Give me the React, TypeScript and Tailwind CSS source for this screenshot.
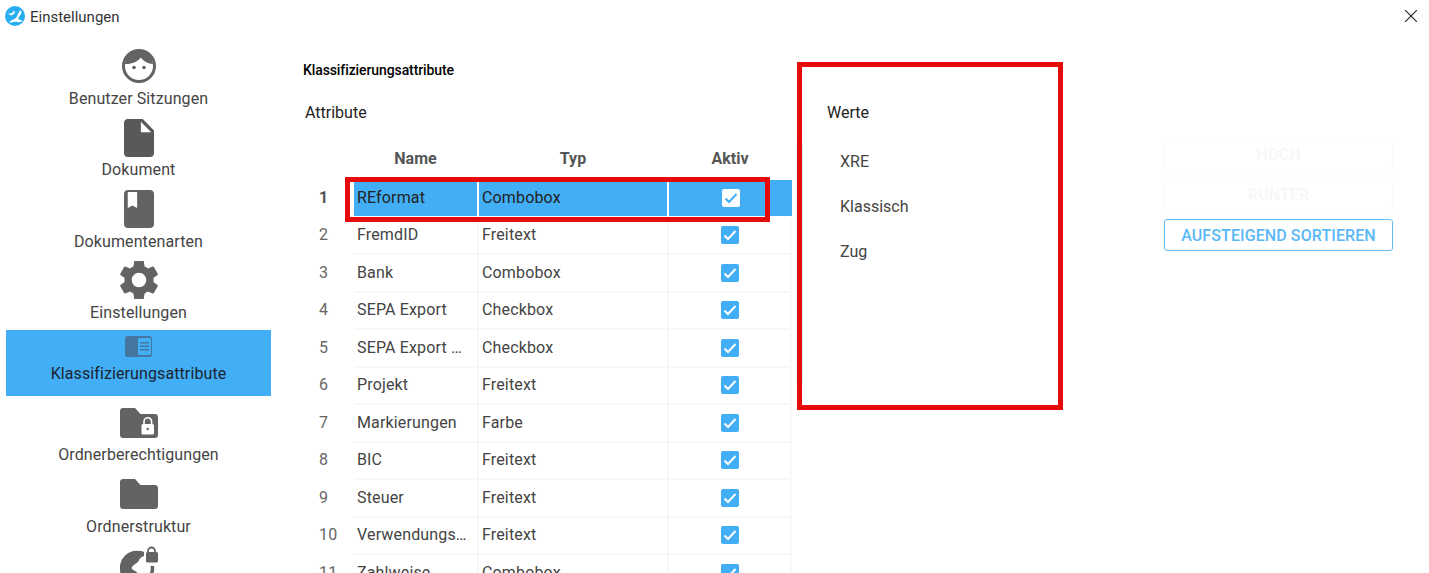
import React from "react";

const DARK = "#636363";

function FaceIcon() {
  return (
    <svg width="34" height="34" viewBox="0 0 34 34">
      <circle cx="17" cy="17" r="15.5" fill="#fff" stroke={DARK} strokeWidth="3" />
      <path d="M3 15C4 6 10 1.5 17 1.5S30 6 31 15C26 15 21 12 19 8.5C16 12.5 9 15.5 3 15Z" fill={DARK} />
      <circle cx="12" cy="18.5" r="1.8" fill={DARK} />
      <circle cx="22" cy="18.5" r="1.8" fill={DARK} />
    </svg>
  );
}

function DocIcon() {
  return (
    <svg width="30" height="38" viewBox="4 2 16 20" preserveAspectRatio="none">
      <path fill="#58595b" d="M6 2c-1.1 0-1.99.9-1.99 2L4 20c0 1.1.89 2 1.99 2H18c1.1 0 2-.9 2-2V8l-6-6H6zm7 7V3.5L18.5 9H13z" />
    </svg>
  );
}

function BookIcon() {
  return (
    <svg width="30" height="38" viewBox="4 2 16 20" preserveAspectRatio="none">
      <path fill={DARK} d="M18 2H6c-1.1 0-2 .9-2 2v16c0 1.1.9 2 2 2h12c1.1 0 2-.9 2-2V4c0-1.1-.9-2-2-2zM6 3h5v8.5l-2.5-1.3L6 11.500V3z" fillRule="evenodd" />
    </svg>
  );
}

function GearIcon() {
  return (
    <svg width="38" height="38" viewBox="2.600 2.600 18.800 18.800">
      <path fill={DARK} d="M19.140 12.940c.04-.3.06-.61.06-.94 0-.32-.02-.64-.07-.94l2.030-1.580c.18-.14.23-.41.12-.61l-1.920-3.320c-.12-.22-.37-.29-.59-.22l-2.390.96c-.5-.38-1.030-.7-1.620-.94l-.36-2.540c-.04-.24-.24-.41-.48-.41h-3.840c-.24 0-.43.17-.47.41l-.36 2.540c-.59.24-1.130.57-1.620.94l-2.390-.96c-.22-.08-.47 0-.59.22L2.740 8.870c-.12.21-.08.47.12.61l2.030 1.580c-.05.3-.09.63-.09.94s.02.64.07.94l-2.030 1.580c-.18.14-.23.41-.12.61l1.920 3.320c.12.22.37.29.59.22l2.390-.96c.5.38 1.030.7 1.620.94l.36 2.540c.05.24.24.41.48.41h3.840c.24 0 .44-.17.47-.41l.36-2.540c.59-.24 1.130-.56 1.620-.94l2.390.96c.22.08.47 0 .59-.22l1.920-3.320c.12-.22.07-.47-.12-.61l-2.010-1.580zM12 15.600c-1.980 0-3.600-1.620-3.600-3.600s1.620-3.600 3.600-3.600 3.600 1.620 3.600 3.600-1.620 3.600-3.600 3.600z" />
    </svg>
  );
}

function PanelIcon() {
  return (
    <svg width="27" height="21" viewBox="0 0 27 21">
      <rect width="27" height="21" rx="2.500" fill="#44769f" />
      <rect x="13" y="2" width="13" height="17" rx="1" fill="#42aef5" />
      <rect x="15" y="6" width="9" height="1.500" fill="#44769f" />
      <rect x="15" y="9.500" width="9" height="1.500" fill="#44769f" />
      <rect x="15" y="13" width="9" height="1.500" fill="#44769f" />
    </svg>
  );
}

function FolderIcon({ lock }: { lock?: boolean }) {
  return (
    <svg width="38" height="30" viewBox="0 0 38 30">
      <path fill={DARK} d="M15 0H3C1.300 0 0 1.300 0 3v24c0 1.700 1.300 3 3 3h32c1.700 0 3-1.300 3-3V9c0-1.700-1.300-3-3-3H20.500z" />
      {lock && (
        <>
          <path d="M24 17v-3.500a3.800 3.800 0 0 1 7.600 0V17" fill="none" stroke="#fff" strokeWidth="1.600" />
          <rect x="21.500" y="16" width="12.500" height="10.500" rx="1.500" fill="#fff" />
          <circle cx="27.700" cy="21" r="1.200" fill={DARK} />
        </>
      )}
    </svg>
  );
}

function GlobeLockIcon() {
  return (
    <svg width="38" height="38" viewBox="0 0 38 38">
      <circle cx="17" cy="22" r="15.500" fill="none" stroke={DARK} strokeWidth="3.500" />
      <path fill={DARK} d="M2 21C3 11 11 5 20 5l8 2-2 3c-4 0-6 2-7 4-1 3-3 3-5 5-1 1-3 2-2 4 2 2 5 2 6 5v8C8 36 1 30 2 21z" />
      <rect x="24" y="4" width="14" height="16" fill="#fff" />
      <path d="M28 8V5a3.500 3.500 0 0 1 7 0v3" fill="none" stroke={DARK} strokeWidth="1.800" />
      <rect x="26" y="6" width="12" height="10.500" rx="1.500" fill={DARK} />
    </svg>
  );
}

function Logo() {
  return (
    <svg width="20" height="20" viewBox="0 0 20 20">
      <circle cx="10" cy="10" r="10" fill="#27aef0" />
      <path fill="#fff" d="M2 5.500C3.500 8 6 8 7.500 6.500l1.500-2 1 1.500C9 8.500 7 9.500 5 9.300zM15.500 4c1.500 1.500 1 4-.5 5.500-1.200 1.200-1.800 2.500-1.500 4l4 1c-1 1.500-3 2-5 1.500-2.500-.6-4.500-.3-7 .8l-1-1.300c2-1.300 4.500-2.500 6.500-3.500C12 11 13 7 15.500 4z" />
    </svg>
  );
}

function Check({ white }: { white?: boolean }) {
  return (
    <span className={white ? "flex h-[18px] w-[18px] items-center justify-center rounded-[2px] bg-white" : "flex h-[18px] w-[18px] items-center justify-center rounded-[2px] bg-[#42aef5]"}>
      <svg width="14" height="12" viewBox="0 0 14 12">
        <path d="M1.500 6.500L5 10l7.500-8" fill="none" stroke={white ? "#42aef5" : "#fff"} strokeWidth="2" />
      </svg>
    </span>
  );
}

const rows: [string, string][] = [
  ["REformat", "Combobox"],
  ["FremdID", "Freitext"],
  ["Bank", "Combobox"],
  ["SEPA Export", "Checkbox"],
  ["SEPA Export …", "Checkbox"],
  ["Projekt", "Freitext"],
  ["Markierungen", "Farbe"],
  ["BIC", "Freitext"],
  ["Steuer", "Freitext"],
  ["Verwendungs…", "Freitext"],
  ["Zahlweise", "Combobox"],
];

function Row({ n, name, typ }: { n: number; name: string; typ: string }) {
  const sel = n === 1;
  return (
    <div className="flex h-[37.5px] shrink-0 text-[16px] tracking-[0.15px] text-[#444]">
      <div className={sel ? "flex w-[51px] items-center pb-[2px] pl-[16px] font-bold text-[#555]" : "flex w-[51px] items-center pb-[2px] pl-[16px] text-[#666]"}>{n}</div>
      <div className={sel ? "flex w-[125px] items-center border-r-2 border-b-2 border-white bg-[#42aef5] pl-[3px] text-[#222]" : "flex w-[125px] items-center border-r-2 border-b-2 border-[#f7f7f7] pl-[3px]"}>{name}</div>
      <div className={sel ? "flex w-[190px] items-center border-r-2 border-b-2 border-white bg-[#42aef5] pl-[3px] text-[#222]" : "flex w-[190px] items-center border-r-2 border-b-2 border-[#f7f7f7] pl-[3px]"}>{typ}</div>
      <div className={sel ? "flex w-[123px] items-center justify-center border-b-2 border-white bg-[#42aef5]" : "flex w-[123px] items-center justify-center border-r-2 border-b-2 border-[#f7f7f7]"}>
        <Check white={sel} />
      </div>
    </div>
  );
}

export default function App() {
  return (
    <div className="relative h-[573px] w-[1429px] overflow-hidden bg-white font-['Roboto',sans-serif]">
      <header className="flex h-[44px] items-start pt-[6px] pl-[5px]">
        <Logo />
        <span className="ml-[5px] text-[15px] leading-[22px] text-[#333]">Einstellungen</span>
        <svg className="absolute top-[10px] left-[1405px]" width="12" height="12" viewBox="0 0 12 12">
          <path d="M0 0L12 12M12 0L0 12" stroke="#222" strokeWidth="1.100" />
        </svg>
      </header>

      <main className="flex">
        <nav className="ml-[6px] flex w-[265px] shrink-0 flex-col text-[16px] leading-[20px] tracking-[0.1px] text-[#444]">
          <div className="flex h-[71px] flex-col items-center pt-[5px]">
            <FaceIcon />
            <span className="mt-[6px]">Benutzer Sitzungen</span>
          </div>
          <div className="flex h-[71px] flex-col items-center pt-[4px]">
            <DocIcon />
            <span className="mt-[3px]">Dokument</span>
          </div>
          <div className="flex h-[72px] flex-col items-center pt-[4px]">
            <BookIcon />
            <span className="mt-[4px]">Dokumentenarten</span>
          </div>
          <div className="flex h-[72px] flex-col items-center pt-[3px]">
            <GearIcon />
            <span className="mt-[4px]">Einstellungen</span>
          </div>
          <div className="flex h-[66px] flex-col items-center bg-[#42aef5] pt-[6px] text-[#1c2430]">
            <PanelIcon />
            <span className="mt-[7px]">Klassifizierungsattribute</span>
          </div>
          <div className="flex h-[70px] flex-col items-center pt-[12px]">
            <FolderIcon lock />
            <span className="mt-[7px]">Ordnerberechtigungen</span>
          </div>
          <div className="flex h-[75px] flex-col items-center pt-[13px]">
            <FolderIcon />
            <span className="mt-[8px]">Ordnerstruktur</span>
          </div>
          <div className="flex flex-col items-center pt-[5px]">
            <GlobeLockIcon />
          </div>
        </nav>

        <section className="ml-[32px] w-[489px] shrink-0">
          <h2 className="mt-[17px] text-[14px] leading-[18px] font-medium tracking-[-0.1px] text-black">Klassifizierungsattribute</h2>
          <h3 className="mt-[24px] ml-[2px] text-[16px] leading-[20px] text-[#222]">Attribute</h3>
          <div className="mt-[24px] flex h-[33px] text-[16px] font-bold text-[#555]">
            <div className="w-[50px]" />
            <div className="w-[125px] text-center">Name</div>
            <div className="w-[190px] text-center">Typ</div>
            <div className="w-[124px] text-center">Aktiv</div>
          </div>
          <div className="flex flex-col">
            {rows.map(([name, typ], i) => (
              <Row key={i} n={i + 1} name={name} typ={typ} />
            ))}
          </div>
        </section>

        <div className="mt-[99px] ml-[4px] h-[240px] w-[7px] shrink-0 bg-[#dcf1fb]" />

        <section className="ml-[24px] w-[337px] shrink-0">
          <h3 className="mt-[59px] text-[16px] leading-[20px] text-[#222]">Werte</h3>
          <ul className="mt-[29px] ml-[13px] flex flex-col gap-[25px] text-[16px] leading-[20px] text-[#444]">
            <li>XRE</li>
            <li>Klassisch</li>
            <li>Zug</li>
          </ul>
        </section>

        <aside className="mt-[95px] flex w-[229px] shrink-0 flex-col gap-[9px] text-[16px] font-medium">
          <button className="h-[31px] rounded-[3px] border border-[#fbfbfb] pt-[1px] tracking-[0.1px] text-[#f7f7f7]">HOCH</button>
          <button className="h-[31px] rounded-[3px] border border-[#fbfbfb] pt-[1px] tracking-[0.1px] text-[#f7f7f7]">RUNTER</button>
          <button className="h-[32px] rounded-[3px] border border-[#64bdf7] pt-[1px] tracking-[0.1px] text-[#5bb8f6]">AUFSTEIGEND SORTIEREN</button>
        </aside>
      </main>

      <div className="absolute top-[177px] left-[345px] h-[45px] w-[425px] border-[5px] border-[#e60a0a]" />
      <div className="absolute top-[62px] left-[797px] h-[348px] w-[266px] border-[5px] border-[#e60a0a]" />
    </div>
  );
}
